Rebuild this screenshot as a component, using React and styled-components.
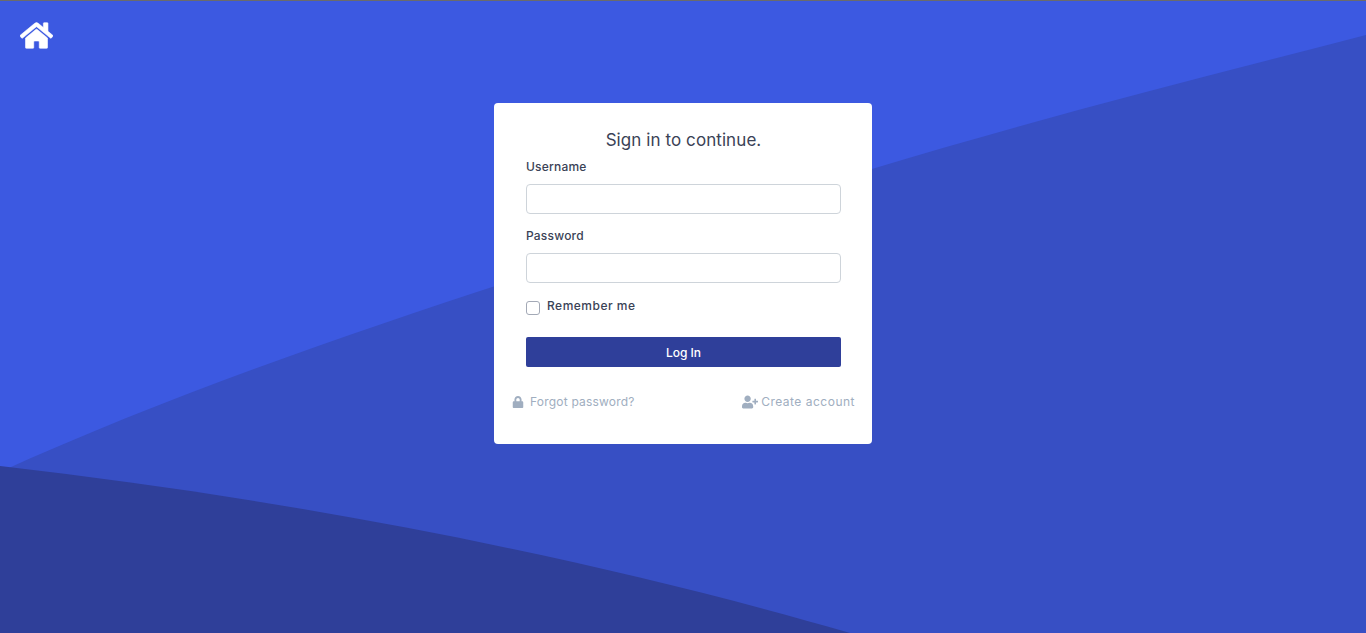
import React from 'react'
import styled, { createGlobalStyle } from 'styled-components'
import { FaHome, FaLock, FaUserPlus } from 'react-icons/fa'

const GlobalStyle = createGlobalStyle`
  html, body {
    margin: 0;
    padding: 0;
    height: 100%;
    overflow: hidden;
    font-family: "Inter", "Open Sans", "Liberation Sans", sans-serif;
  }
`
const Page = styled.div`
  position: relative;
  box-sizing: border-box;
  height: 633px;
  border-top: 1px solid #6b6b6b;
  background: #3c59e1;
  overflow: hidden;
`
const Waves = styled.svg`
  position: absolute;
  left: 0;
  top: -1px;
  width: 1366px;
  height: 633px;
`
const Content = styled.div`
  position: relative;
  display: flex;
  flex-direction: column;
`
const TopBar = styled.header`
  box-sizing: border-box;
  height: 102px;
  padding: 18px 20px 0;
  color: #fff;
  font-size: 33px;
  line-height: 0;
  svg {
    stroke: #fff;
    stroke-width: 10;
  }
`
const Card = styled.main`
  box-sizing: border-box;
  align-self: center;
  width: 378px;
  height: 341px;
  padding: 25px 31px 0 32px;
  background: #fff;
  border-radius: 4px;
`
const Title = styled.h1`
  margin: 0 0 6px;
  font-size: 17px;
  font-weight: 400;
  line-height: 24px;
  letter-spacing: 0.08px;
  text-align: center;
  color: #3a4256;
`
const Field = styled.div`
  margin-bottom: 13px;
`
const Label = styled.label`
  display: block;
  margin-bottom: 8px;
  font-size: 12px;
  font-weight: 500;
  line-height: 18px;
  letter-spacing: 0.2px;
  color: #3a4256;
`
const Input = styled.input`
  display: block;
  box-sizing: border-box;
  width: 100%;
  height: 30px;
  padding: 0 10px;
  background: #fff;
  border: 1px solid #ced4da;
  border-radius: 4px;
  outline: none;
`
const RememberRow = styled.div`
  display: flex;
  align-items: flex-start;
  gap: 7px;
  margin-top: 14px;
`
const Checkbox = styled.input`
  appearance: none;
  box-sizing: border-box;
  width: 14px;
  height: 14px;
  margin: 4px 0 0;
  background: #fff;
  border: 1px solid #a3a9b6;
  border-radius: 3px;
`
const RememberLabel = styled.label`
  font-size: 12px;
  font-weight: 500;
  line-height: 18px;
  letter-spacing: 0.5px;
  color: #3a4256;
`
const Submit = styled.button`
  display: block;
  width: 100%;
  height: 30px;
  margin-top: 22px;
  padding: 0;
  background: #2f3f9a;
  border: 0;
  border-radius: 2px;
  color: #fff;
  font-family: inherit;
  font-size: 12px;
  font-weight: 500;
`
const Links = styled.nav`
  display: flex;
  justify-content: space-between;
  margin: 26px -14px 0;
`
const LinkItem = styled.a`
  display: flex;
  align-items: center;
  gap: ${props => props.$gap}px;
  color: #a0aec0;
  font-size: 12px;
  line-height: 18px;
  letter-spacing: ${props => props.$spacing}px;
  text-decoration: none;
  svg {
    font-size: ${props => props.$iconSize}px;
  }
`

export default function App() {
  return (
    <>
      <GlobalStyle />
      <Page>
        <Waves viewBox="0 0 1366 633">
          <path d="M0 472C280 345 640 240 872 169C1040 118 1200 78 1366 35V633H0Z" fill="#374fc4" />
          <path d="M0 466C300 500 600 560 850 633H0Z" fill="#2f3f99" />
        </Waves>
        <Content>
          <TopBar>
            <FaHome />
          </TopBar>
          <Card>
            <Title>Sign in to continue.</Title>
            <Field>
              <Label>Username</Label>
              <Input type="text" />
            </Field>
            <Field>
              <Label>Password</Label>
              <Input type="password" />
            </Field>
            <RememberRow>
              <Checkbox type="checkbox" />
              <RememberLabel>Remember me</RememberLabel>
            </RememberRow>
            <Submit>Log In</Submit>
            <Links>
              <LinkItem href="#" $gap={6} $iconSize={12} $spacing={0.2}><FaLock />Forgot password?</LinkItem>
              <LinkItem href="#" $gap={3} $iconSize={16} $spacing={0.5}><FaUserPlus />Create account</LinkItem>
            </Links>
          </Card>
        </Content>
      </Page>
    </>
  )
}
